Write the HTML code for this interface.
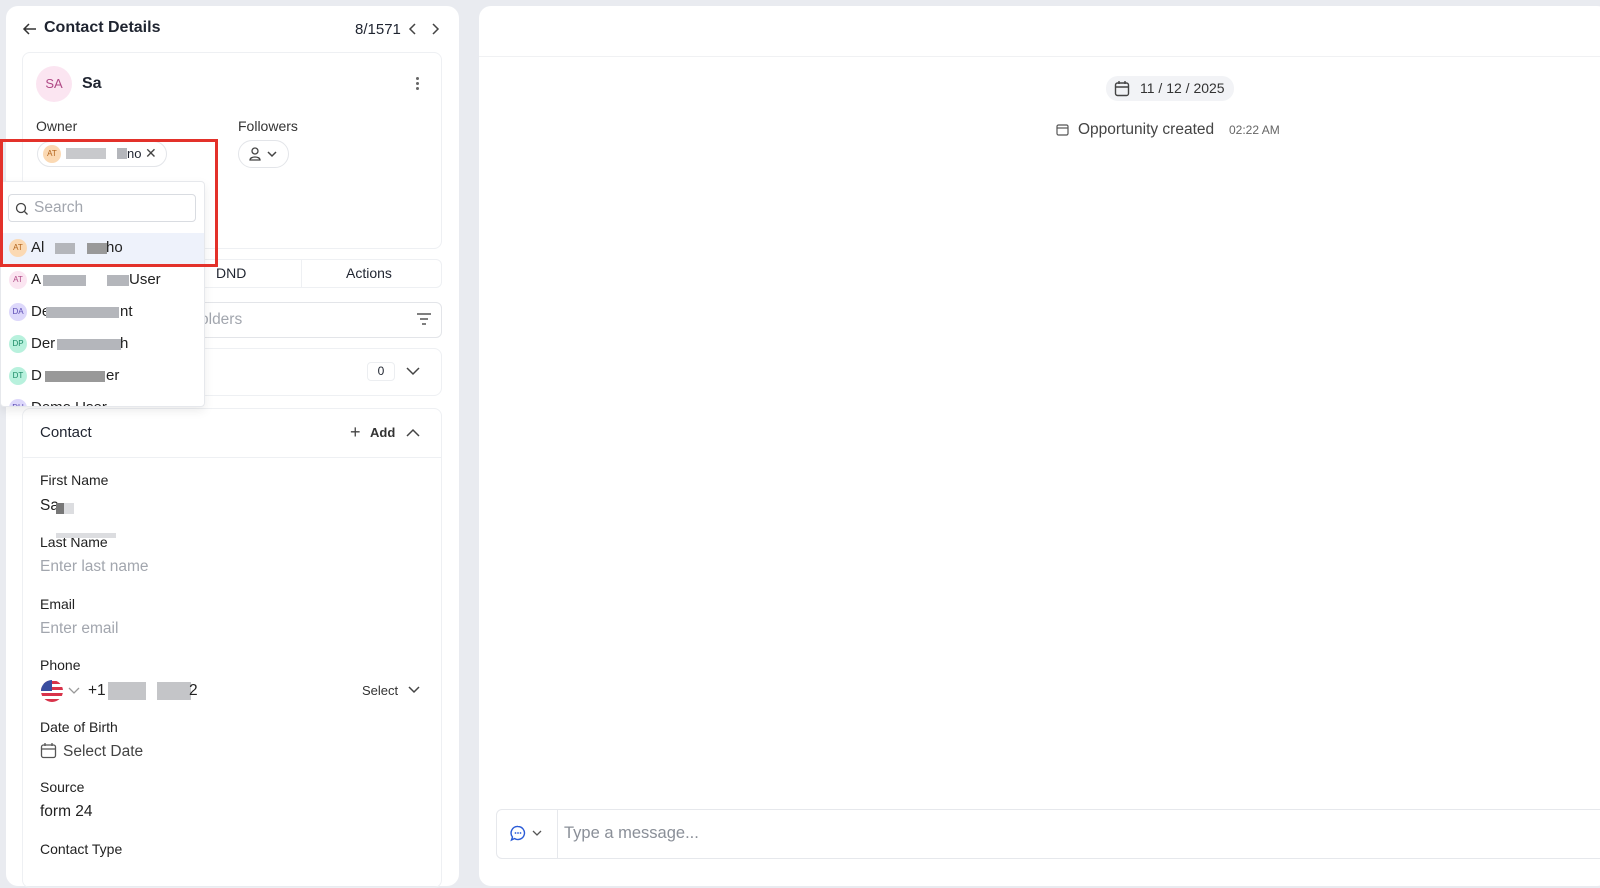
<!DOCTYPE html>
<html><head><style>
*{box-sizing:border-box;margin:0;padding:0}
body{width:1600px;height:879px;background:#e9ebf0;font-family:"Liberation Sans",sans-serif;color:#1f2430;position:relative;overflow:hidden}
.a{position:absolute}
.bl{position:absolute;background:#b4b6bb;height:11px}
.bl2{position:absolute;background:#dcdde0;height:11px}
.lab{position:absolute;left:40px;font-size:14px;color:#222}
.val{position:absolute;left:40px;font-size:15.5px;color:#222}
.ph{position:absolute;left:40px;font-size:15.5px;color:#a2a6ae}
.av{position:absolute;width:18px;height:18px;border-radius:50%;font-size:8px;text-align:center;line-height:18px}
.it{position:absolute;left:30px;font-size:15px;color:#222}
</style></head><body>
<div class="a" style="left:6px;top:6px;width:453px;height:880px;background:#fff;border-radius:12px"></div>
<div class="a" style="left:479px;top:6px;width:1130px;height:880px;background:#fff;border-radius:12px"></div>

<svg class="a" style="left:22px;top:21px" width="16" height="16" viewBox="0 0 16 16"><path d="M14 8H2M7 3L2 8l5 5" fill="none" stroke="#333" stroke-width="1.5"/></svg>
<div class="a" style="left:44px;top:19px;font-size:16px;font-weight:600">Contact Details</div>
<div class="a" style="left:355px;top:21px;font-size:15px">8/1571</div>
<svg class="a" style="left:406px;top:23px" width="36" height="12"><path d="M9 1L4 6l5 5M27 1l5 5-5 5" fill="none" stroke="#444" stroke-width="1.5"/></svg>

<div class="a" style="left:22px;top:52px;width:420px;height:197px;border:1px solid #eef0f3;border-radius:8px"></div>
<div class="a" style="left:36px;top:66px;width:36px;height:36px;border-radius:50%;background:#fbe5f1;color:#b04a86;font-size:13px;text-align:center;line-height:36px">SA</div>
<div class="a" style="left:82px;top:75px;font-size:16px;font-weight:600">Sa</div>
<div class="a" style="left:416px;top:77px;width:3px;height:3px;background:#666;border-radius:50%;box-shadow:0 5px #666,0 10px #666"></div>
<div class="a" style="left:36px;top:118px;font-size:14px;color:#333">Owner</div>
<div class="a" style="left:238px;top:118px;font-size:14px;color:#333">Followers</div>
<div class="a" style="left:37px;top:141px;width:130px;height:26px;border:1px solid #e3e5e9;border-radius:13px"></div>
<div class="av" style="left:43px;top:145px;background:#fbd9b3;color:#b2631b">AT</div>
<div class="bl" style="left:66px;top:148px;width:40px;background:#c8c9cc"></div>
<div class="bl" style="left:117px;top:148px;width:10px"></div>
<div class="a" style="left:127px;top:146px;font-size:13px">no</div>
<div class="a" style="left:145px;top:145px;font-size:14px;color:#444">✕</div>
<div class="a" style="left:238px;top:140px;width:51px;height:28px;border:1px solid #e3e5e9;border-radius:14px"></div>
<svg class="a" style="left:248px;top:146px" width="32" height="16"><circle cx="7" cy="5" r="3" fill="none" stroke="#444" stroke-width="1.3"/><path d="M2 14c0-4 10-4 10 0z" fill="none" stroke="#444" stroke-width="1.3"/><path d="M20 6l4 4 4-4" fill="none" stroke="#444" stroke-width="1.5"/></svg>

<div class="a" style="left:22px;top:259px;width:420px;height:29px;border:1px solid #eef0f3;border-radius:6px"></div>
<div class="a" style="left:301px;top:259px;width:1px;height:29px;background:#eef0f3"></div>
<div class="a" style="left:216px;top:265px;font-size:14px">DND</div>
<div class="a" style="left:346px;top:265px;font-size:14px">Actions</div>
<div class="a" style="left:22px;top:302px;width:420px;height:36px;border:1px solid #e3e5e9;border-radius:6px"></div>
<div class="a" style="left:200px;top:311px;font-size:15.5px;color:#a2a6ae">olders</div>
<svg class="a" style="left:416px;top:312px" width="16" height="14"><path d="M1 2h14M4 7h8M6 12h4" stroke="#555" stroke-width="1.5"/></svg>
<div class="a" style="left:22px;top:348px;width:420px;height:48px;border:1px solid #eef0f3;border-radius:8px"></div>
<div class="a" style="left:367px;top:362px;width:28px;height:19px;border:1px solid #eceef1;border-radius:4px;font-size:12px;text-align:center;line-height:17px">0</div>
<svg class="a" style="left:406px;top:366px" width="14" height="10"><path d="M1 2l6 6 6-6" fill="none" stroke="#444" stroke-width="1.5"/></svg>

<div class="a" style="left:22px;top:408px;width:420px;height:480px;border:1px solid #eef0f3;border-radius:8px"></div>
<div class="a" style="left:22px;top:457px;width:420px;height:1px;background:#eef0f3"></div>
<div class="a" style="left:40px;top:424px;font-size:15px;font-weight:500">Contact</div>
<div class="a" style="left:350px;top:422px;font-size:18px;color:#444">+</div>
<div class="a" style="left:370px;top:425px;font-size:13px;font-weight:600;color:#333">Add</div>
<svg class="a" style="left:406px;top:428px" width="14" height="10"><path d="M1 8l6-6 6 6" fill="none" stroke="#444" stroke-width="1.5"/></svg>
<div class="lab" style="top:472px">First Name</div>
<div class="val" style="top:497px">Sa</div>
<div class="bl" style="left:56px;top:503px;width:8px;background:#777"></div><div class="bl2" style="left:64px;top:503px;width:10px"></div>
<div class="lab" style="top:534px">Last Name</div>
<div class="bl2" style="left:56px;top:533px;width:60px;height:5px"></div>
<div class="ph" style="top:558px">Enter last name</div>
<div class="lab" style="top:596px">Email</div>
<div class="ph" style="top:620px">Enter email</div>
<div class="lab" style="top:657px">Phone</div>
<svg class="a" style="left:40px;top:679px" width="24" height="24"><clipPath id="c"><circle cx="12" cy="12" r="11"/></clipPath><g clip-path="url(#c)"><rect width="24" height="24" fill="#fff"/><rect y="2" width="24" height="3" fill="#d8334a"/><rect y="8" width="24" height="3" fill="#d8334a"/><rect y="14" width="24" height="3" fill="#d8334a"/><rect y="20" width="24" height="3" fill="#d8334a"/><rect width="12" height="12" fill="#3a4ea0"/></g></svg>
<svg class="a" style="left:68px;top:687px" width="12" height="8"><path d="M1 1l5 5 5-5" fill="none" stroke="#999" stroke-width="1.3"/></svg>
<div class="val" style="left:88px;top:682px">+1</div>
<div class="bl" style="left:108px;top:682px;width:38px;height:18px;background:#c4c5c8"></div>
<div class="bl" style="left:157px;top:682px;width:34px;height:18px;background:#c4c5c8"></div>
<div class="val" style="left:189px;top:682px">2</div>
<div class="a" style="left:362px;top:683px;font-size:13px;font-weight:500;color:#333">Select</div>
<svg class="a" style="left:408px;top:686px" width="12" height="8"><path d="M1 1l5 5 5-5" fill="none" stroke="#444" stroke-width="1.5"/></svg>
<div class="lab" style="top:719px">Date of Birth</div>
<svg class="a" style="left:40px;top:742px" width="17" height="17"><rect x="1.5" y="3" width="14" height="12.5" rx="2" fill="none" stroke="#555" stroke-width="1.3"/><path d="M1.5 7h14M5 1v3M12 1v3" stroke="#555" stroke-width="1.3"/></svg>
<div class="val" style="left:63px;top:743px;color:#444">Select Date</div>
<div class="lab" style="top:779px">Source</div>
<div class="val" style="top:803px">form 24</div>
<div class="lab" style="top:841px">Contact Type</div>

<div class="a" style="left:0;top:181px;width:205px;height:226px;background:#fff;border:1px solid #e6e8ec;border-radius:4px;box-shadow:0 4px 10px rgba(0,0,0,.08);overflow:hidden">
<div class="a" style="left:7px;top:12px;width:188px;height:28px;border:1px solid #d9dce1;border-radius:4px"></div>
<svg class="a" style="left:14px;top:20px" width="14" height="14"><circle cx="6" cy="6" r="4.5" fill="none" stroke="#444" stroke-width="1.3"/><path d="M9.5 9.5l3 3" stroke="#444" stroke-width="1.3"/></svg>
<div class="a" style="left:33px;top:17px;font-size:15.5px;color:#a2a6ae">Search</div>
<div class="a" style="left:0;top:51px;width:205px;height:33px;background:#eef2fb"></div>
<div class="av" style="left:8px;top:57px;background:#fbd9b3;color:#b2631b">AT</div>
<div class="it" style="top:57px">Al</div><div class="bl" style="left:54px;top:61px;width:20px"></div><div class="bl" style="left:86px;top:61px;width:20px;background:#999"></div><div class="it" style="left:105px;top:57px">ho</div>
<div class="av" style="left:8px;top:89px;background:#fbe5f1;color:#b04a86">AT</div>
<div class="it" style="top:89px">A</div><div class="bl" style="left:42px;top:93px;width:43px"></div><div class="bl" style="left:106px;top:93px;width:22px"></div><div class="it" style="left:128px;top:89px">User</div>
<div class="av" style="left:8px;top:121px;background:#ddd8fb;color:#5b4bb3">DA</div>
<div class="it" style="top:121px">De</div><div class="bl" style="left:45px;top:125px;width:73px"></div><div class="it" style="left:119px;top:121px">nt</div>
<div class="av" style="left:8px;top:153px;background:#b8f1dd;color:#1a8a65">DP</div>
<div class="it" style="top:153px">Der</div><div class="bl" style="left:56px;top:157px;width:64px"></div><div class="it" style="left:119px;top:153px">h</div>
<div class="av" style="left:8px;top:185px;background:#b8f1dd;color:#1a8a65">DT</div>
<div class="it" style="top:185px">D</div><div class="bl" style="left:44px;top:189px;width:60px;background:#999"></div><div class="it" style="left:105px;top:185px">er</div>
<div class="av" style="left:8px;top:217px;background:#ddd8fb;color:#5b4bb3">DU</div>
<div class="it" style="top:217px">Demo User</div>
</div>
<div class="a" style="left:0;top:139px;width:218px;height:128px;border:3px solid #e3312a"></div>

<div class="a" style="left:479px;top:56px;width:1121px;height:1px;background:#f0f1f3"></div>
<div class="a" style="left:1106px;top:76px;width:128px;height:25px;background:#f2f3f6;border-radius:12px"></div>
<svg class="a" style="left:1114px;top:80px" width="16" height="17"><rect x="1.5" y="3" width="13" height="12.5" rx="2" fill="none" stroke="#444" stroke-width="1.4"/><path d="M1.5 7h13M5 1v3M11 1v3" stroke="#444" stroke-width="1.4"/></svg>
<div class="a" style="left:1140px;top:80px;font-size:14px;color:#333">11 / 12 / 2025</div>
<svg class="a" style="left:1056px;top:123px" width="13" height="13"><rect x="1" y="2" width="11" height="10" rx="1.5" fill="none" stroke="#555" stroke-width="1.2"/><path d="M1 5h11" stroke="#555" stroke-width="1.2"/></svg>
<div class="a" style="left:1078px;top:121px;font-size:15.5px;color:#444">Opportunity created</div>
<div class="a" style="left:1229px;top:123px;font-size:12px;color:#666">02:22 AM</div>

<div class="a" style="left:496px;top:809px;width:1110px;height:50px;border:1px solid #e6e8ec;border-radius:6px;background:#fff"></div>
<div class="a" style="left:557px;top:810px;width:1px;height:48px;background:#e6e8ec"></div>
<svg class="a" style="left:510px;top:825px" width="34" height="17"><path d="M8 1.5a6.5 6.5 0 1 1-3.5 12L1.5 15l1-3A6.5 6.5 0 0 1 8 1.5z" fill="none" stroke="#2a5bd7" stroke-width="1.4"/><circle cx="5.5" cy="8" r=".9" fill="#2a5bd7"/><circle cx="8" cy="8" r=".9" fill="#2a5bd7"/><circle cx="10.5" cy="8" r=".9" fill="#2a5bd7"/><path d="M23 6l4 4 4-4" fill="none" stroke="#555" stroke-width="1.3"/></svg>
<div class="a" style="left:564px;top:824px;font-size:16.5px;color:#8a8f98">Type a message...</div>
</body></html>
